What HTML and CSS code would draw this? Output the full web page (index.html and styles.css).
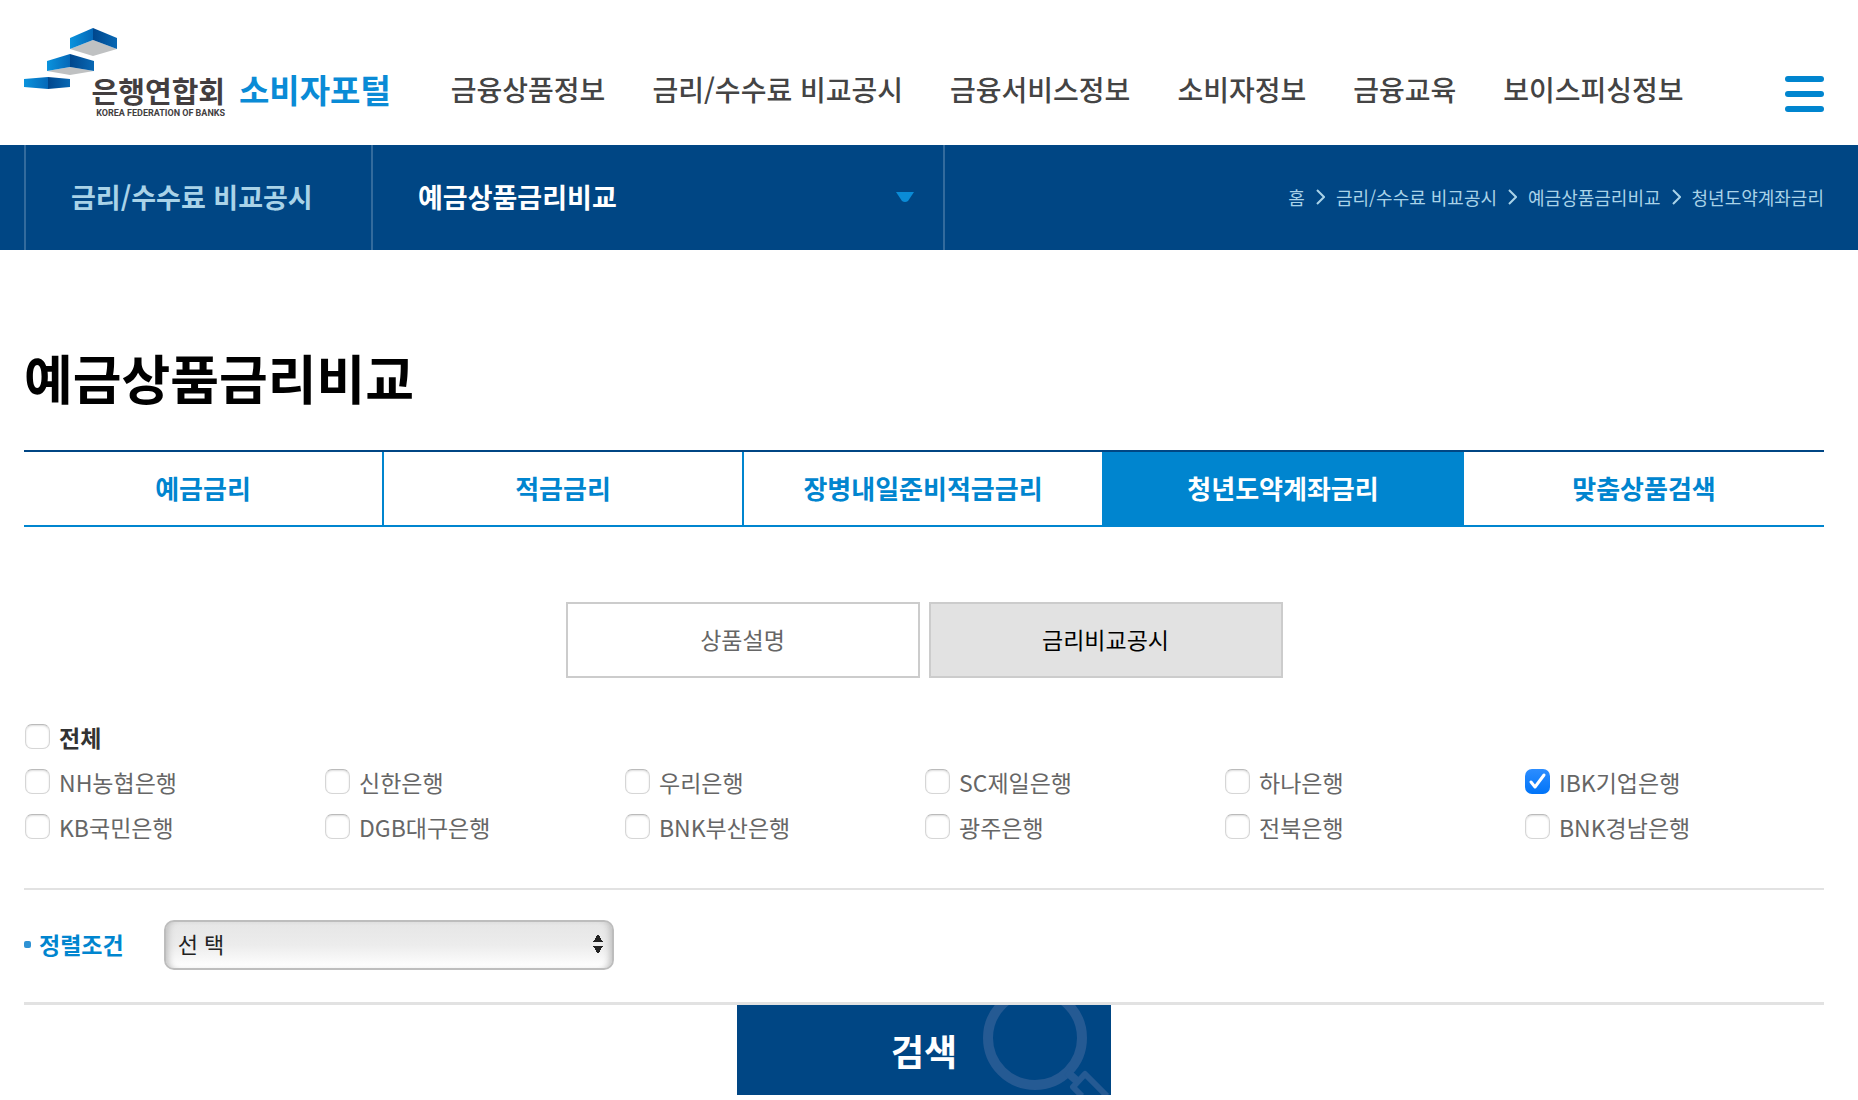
FILE: index.html
```html
<!DOCTYPE html>
<html lang="ko">
<head>
    <meta charset="UTF-8">
    <meta name="viewport" content="width=device-width, initial-scale=1.0">
    <title>예금상품금리비교</title>
    <link rel="stylesheet" href="styles.css">
</head>
<body>
    <header class="header">
        <a href="#" class="logo">
            <span class="logo-bank">
                <svg class="logo-mark" width="94" height="62" viewBox="0 0 94 62" aria-hidden="true">
                    <defs>
                        <linearGradient id="light"><stop offset="0" stop-color="#0a93dd"/><stop offset="1" stop-color="#0568b8"/></linearGradient>
                        <linearGradient id="dark"><stop offset="0" stop-color="#00468c"/><stop offset="1" stop-color="#0868b4"/></linearGradient>
                    </defs>
                    <path d="M46 21 69 12 93 21 69 28z" fill="#bfc1c2"/>
                    <path d="M46 10 69 0V12L46 21z" fill="url(#light)"/>
                    <path d="M69 0 93 10V21L69 12z" fill="url(#dark)"/>
                    <path d="M23 43 46 39 70 43 46 47z" fill="#bfc1c2"/>
                    <path d="M23 33 46 26V39L23 43z" fill="url(#light)"/>
                    <path d="M46 26 70 33V43L46 39z" fill="url(#dark)"/>
                    <path d="M0 51 24 49V61L0 59z" fill="url(#light)"/>
                    <path d="M24 49 46 51V59L24 61z" fill="url(#dark)"/>
                </svg>
                <span class="logo-text">
                    <strong class="logo-name">은행연합회</strong>
                    <span class="logo-en">KOREA FEDERATION OF BANKS</span>
                </span>
            </span>
            <strong class="logo-portal">소비자포털</strong>
        </a>
        <nav class="nav">
            <a href="#">금융상품정보</a>
            <a href="#">금리/수수료 비교공시</a>
            <a href="#">금융서비스정보</a>
            <a href="#">소비자정보</a>
            <a href="#">금융교육</a>
            <a href="#">보이스피싱정보</a>
        </nav>
        <button type="button" class="menu-button" aria-label="전체메뉴">
            <span></span><span></span><span></span>
        </button>
    </header>

    <div class="location">
        <a href="#" class="location-group">금리/수수료 비교공시</a>
        <button type="button" class="location-page">
            예금상품금리비교
            <svg width="18" height="10" viewBox="0 0 18 10" aria-hidden="true"><path d="M0 0H18L12 9Q9 11 6 9z" fill="#0a8bd6"/></svg>
        </button>
        <nav class="breadcrumb">
            <a href="#">홈</a>
            <svg width="9" height="16" viewBox="0 0 9 16" aria-hidden="true"><path d="M1 1 8 8 1 15"/></svg>
            <a href="#">금리/수수료 비교공시</a>
            <svg width="9" height="16" viewBox="0 0 9 16" aria-hidden="true"><path d="M1 1 8 8 1 15"/></svg>
            <a href="#">예금상품금리비교</a>
            <svg width="9" height="16" viewBox="0 0 9 16" aria-hidden="true"><path d="M1 1 8 8 1 15"/></svg>
            <a href="#">청년도약계좌금리</a>
        </nav>
    </div>

    <main class="content">
        <h1>예금상품금리비교</h1>

        <nav class="tabs">
            <a href="#">예금금리</a>
            <a href="#">적금금리</a>
            <a href="#">장병내일준비적금금리</a>
            <a href="#" class="active">청년도약계좌금리</a>
            <a href="#">맞춤상품검색</a>
        </nav>

        <div class="sub-tabs">
            <button type="button">상품설명</button>
            <button type="button" class="active">금리비교공시</button>
        </div>

        <form class="search-form">
            <div class="banks">
                <label class="all"><input type="checkbox">전체</label>
                <label><input type="checkbox">NH농협은행</label>
                <label><input type="checkbox">신한은행</label>
                <label><input type="checkbox">우리은행</label>
                <label><input type="checkbox">SC제일은행</label>
                <label><input type="checkbox">하나은행</label>
                <label><input type="checkbox" checked>IBK기업은행</label>
                <label><input type="checkbox">KB국민은행</label>
                <label><input type="checkbox">DGB대구은행</label>
                <label><input type="checkbox">BNK부산은행</label>
                <label><input type="checkbox">광주은행</label>
                <label><input type="checkbox">전북은행</label>
                <label><input type="checkbox">BNK경남은행</label>
            </div>
            <div class="sort">
                <label for="sort">정렬조건</label>
                <select id="sort">
                    <option>선 택</option>
                </select>
            </div>
            <button type="submit" class="search-button">
                <svg class="glass" width="130" height="90" viewBox="0 0 130 90" aria-hidden="true">
                    <circle cx="54" cy="33" r="47" stroke-width="10"/>
                    <path d="M86 67 96 76" stroke-width="8"/>
                    <path d="M126 91 104 69 92 82 101 91" stroke-width="6" stroke-linejoin="round"/>
                </svg>
                <span>검색</span>
            </button>
        </form>
    </main>
</body>
</html>
```
FILE: styles.css
```css
* {
    box-sizing: border-box;
}
body {
    margin: 0;
    font-family: "Noto Sans CJK KR", sans-serif;
    font-size: 23px;
    line-height: 32px;
    color: #666;
    background-color: #fff;
}
a {
    color: inherit;
    text-decoration: none;
}
button, select {
    font: inherit;
    color: inherit;
    cursor: pointer;
}

/* header */
.header {
    display: flex;
    align-items: flex-start;
    height: 145px;
    padding: 28px 34px 0 24px;
}
.logo {
    display: flex;
    align-items: flex-end;
    gap: 14px;
}
.logo-bank {
    display: grid;
    width: 201px;
    height: 90px;
}
.logo-mark, .logo-text {
    grid-area: 1 / 1;
}
.logo-text {
    display: flex;
    flex-direction: column;
    align-self: end;
    align-items: flex-end;
    color: #433e3f;
}
.logo-name {
    font-size: 29px;
    line-height: 36px;
}
.logo-en {
    font-family: Roboto, sans-serif;
    font-size: 9px;
    font-weight: bold;
    line-height: 10px;
    white-space: nowrap;
}
.logo-portal {
    margin-bottom: 12px;
    font-size: 33px;
    line-height: 34px;
    color: #0a8bd6;
}
.nav {
    display: flex;
    gap: 47px;
    margin: 45px 0 0 60px;
    font-size: 28px;
    font-weight: 500;
    color: #444;
    white-space: nowrap;
}
.menu-button {
    display: flex;
    flex-direction: column;
    gap: 9px;
    width: 39px;
    margin: 48px 0 0 auto;
    padding: 0;
    border: none;
    background: none;
}
.menu-button span {
    height: 6px;
    border-radius: 3px;
    background-color: #0085cf;
}

/* location bar */
.location {
    display: flex;
    height: 105px;
    padding: 0 34px 0 24px;
    background-color: #004684;
    color: #a9d3e8;
    white-space: nowrap;
}
.location-group, .location-page {
    display: flex;
    align-items: center;
    padding: 0 29px 2px 45px;
    border: 0 solid #336b9d;
    border-left-width: 2px;
    font-size: 27px;
    font-weight: bold;
}
.location-group {
    width: 347px;
}
.location-page {
    justify-content: space-between;
    width: 574px;
    border-right-width: 2px;
    background: none;
    color: #fff;
}
.breadcrumb {
    display: flex;
    align-items: center;
    gap: 11px;
    margin-left: auto;
    padding-bottom: 2px;
    font-size: 18px;
}
.breadcrumb svg {
    fill: none;
    stroke: #a9d3e8;
    stroke-width: 2;
}

/* content */
.content {
    padding: 0 34px 0 24px;
}
h1 {
    margin: 87px 0 33px;
    font-size: 53px;
    line-height: 80px;
    color: #000;
}
.tabs {
    display: grid;
    grid-template-columns: repeat(5, 1fr);
    height: 77px;
    border-top: 2px solid #004684;
    border-bottom: 2px solid #0085cf;
    font-size: 26px;
    font-weight: bold;
    color: #0085cf;
}
.tabs a {
    display: flex;
    align-items: center;
    justify-content: center;
    padding-bottom: 2px;
    border-right: 2px solid #0085cf;
}
.tabs a:last-child {
    border-right: none;
}
.tabs .active {
    background-color: #0085cf;
    color: #fff;
}
.sub-tabs {
    display: flex;
    justify-content: center;
    gap: 9px;
    margin: 75px 0 43px;
}
.sub-tabs button {
    width: 354px;
    height: 76px;
    padding-bottom: 4px;
    border: 2px solid #ccc;
    background-color: #fff;
}
.sub-tabs .active {
    background-color: #e2e2e2;
    color: #000;
}

/* search form */
.banks {
    display: grid;
    grid-template-columns: repeat(6, 1fr);
    grid-auto-rows: 45px;
    margin-top: -7px;
    padding-bottom: 39px;
    border-bottom: 2px solid #e2e2e2;
}
.banks label {
    display: flex;
    align-items: center;
    gap: 9px;
}
.banks .all {
    grid-column: 1 / -1;
    font-weight: bold;
    color: #333;
}
.banks input {
    appearance: none;
    width: 25px;
    height: 25px;
    margin: 0 0 0 1px;
    border: 1px solid #d6d6d6;
    border-top-color: #bbb;
    border-radius: 7px;
    background-color: #fff;
    box-shadow: inset 0 1px 2px #ddd;
}
.banks input:checked {
    border: none;
    background:
        url("data:image/svg+xml,%3Csvg xmlns='http://www.w3.org/2000/svg' viewBox='0 0 25 25'%3E%3Cpath d='M6 13 10 18 19 6' fill='none' stroke='white' stroke-width='3' stroke-linecap='round' stroke-linejoin='round'/%3E%3C/svg%3E"),
        linear-gradient(#2c8dff, #0074f8);
    box-shadow: none;
}
.sort {
    display: flex;
    align-items: center;
    gap: 40px;
    padding: 30px 0 32px;
    border-bottom: 3px solid #e2e2e2;
}
.sort label {
    display: flex;
    align-items: center;
    gap: 8px;
    padding-bottom: 2px;
    font-weight: bold;
    color: #0085cf;
}
.sort label::before {
    content: "";
    width: 7px;
    height: 7px;
    border-radius: 2px;
    background-color: #2f92d4;
}
.sort select {
    appearance: none;
    width: 450px;
    height: 50px;
    padding: 0 12px 4px;
    border: 2px solid #bdbdbd;
    border-radius: 10px;
    background:
        conic-gradient(from 148deg at 50% 0, #222 64deg, transparent 0) right 9px top 12px / 10px 8px no-repeat,
        conic-gradient(from -32deg at 50% 100%, #222 64deg, transparent 0) right 9px top 24px / 10px 8px no-repeat,
        linear-gradient(#e6e6e6, #ececec 50%, #fff);
    box-shadow: inset 7px 0 7px -5px #bbb, inset -7px 0 7px -5px #bbb;
    font-size: 22px;
    color: #222;
}
.search-button {
    display: grid;
    width: 374px;
    height: 90px;
    margin: 0 auto;
    padding: 0;
    border: none;
    background-color: #004684;
    color: #fff;
    font-size: 36px;
    font-weight: bold;
    overflow: hidden;
}
.search-button > * {
    grid-area: 1 / 1;
    place-self: center;
}
.search-button .glass {
    justify-self: end;
    fill: none;
    stroke: #255a93;
}
```
